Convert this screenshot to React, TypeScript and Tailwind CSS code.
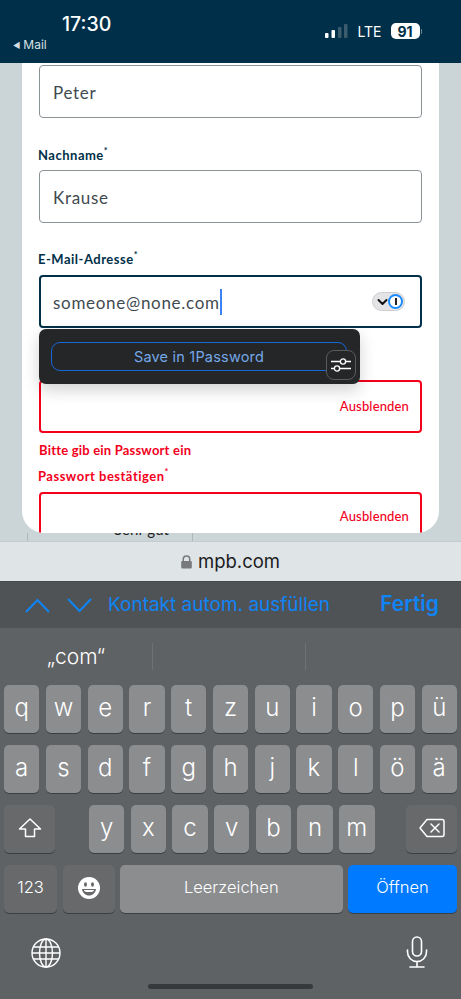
import React from "react";

const web = { fontFamily: "Lato, sans-serif" };
const ios = { fontFamily: "Inter, 'Liberation Sans', sans-serif" };

function Input({ value, error, focus, children, h = "h-[53px]" }: { value?: string; error?: boolean; focus?: boolean; children?: React.ReactNode; h?: string }) {
  const border = error
    ? "border-2 border-[#f2001c]"
    : focus
    ? "border-2 border-[#003049] pl-[12px]"
    : "border border-[#8a9296] pl-[13px]";
  return (
    <div className={`${h} ${border} shrink-0 rounded-[4px] bg-white flex items-center pr-[11px] pt-[3px] text-[17px] tracking-[0.7px] text-[#3f4a50]`}>
      {value}
      {children}
    </div>
  );
}

function Ausblenden() {
  return <span className="ml-auto -mt-[3px] text-[13px] font-medium tracking-[0.15px] text-[#f2001c]">Ausblenden</span>;
}

function Label({ text, color = "text-[#003049]" }: { text: string; color?: string }) {
  return (
    <div className={`h-[16px] -ml-[1px] flex items-center text-[13px] font-bold tracking-[0.5px] ${color}`}>
      {text}
      <sup className="text-[9px] -mt-[2px]">*</sup>
    </div>
  );
}

function Key({ label, wide, dark, blue, grow, small }: { label: React.ReactNode; wide?: string; dark?: boolean; blue?: boolean; grow?: boolean; small?: boolean }) {
  const bg = blue ? "bg-[#007aff]" : dark ? "bg-[#68696b]" : "bg-[#8c8d8f]";
  return (
    <div
      className={`${wide ?? "w-[35.4px]"} ${bg} ${grow ? "flex-1" : "shrink-0"} h-[48px] rounded-[5px] shadow-[0_1px_0_#3c3f42] flex items-center justify-center text-white ${small ? "text-[16.5px] font-light pb-[3px]" : "text-[24px] font-light pb-[3px]"}`}
    >
      {label}
    </div>
  );
}

function Row({ keys }: { keys: string }) {
  return (
    <>
      {keys.split("").map((k) => (
        <Key key={k} label={k} />
      ))}
    </>
  );
}

export default function App() {
  return (
    <div className="relative w-[461px] h-[999px] overflow-hidden flex flex-col bg-[#5f6265]">
      {/* status bar */}
      <div className="h-[63px] shrink-0 bg-[#003049] flex text-white" style={ios}>
        <div className="w-[110px] pl-[13px] relative">
          <div className="pl-[49px] pt-[12px] text-[19.5px] leading-[24px] font-medium">17:30</div>
          <div className="mt-[2px] flex items-center gap-[3px] text-[12px] leading-[14px] text-[#d9e0e4]">
            <span className="text-[8px]">◀</span>
            <span>Mail</span>
          </div>
        </div>
        <div className="ml-auto mr-[39px] mt-[22px] h-[18px] flex items-center">
          <svg width="24" height="16" viewBox="0 0 24 16">
            <rect x="1" y="10" width="3.5" height="5" rx="1" fill="#fff" />
            <rect x="7.5" y="7" width="3.5" height="8" rx="1" fill="#fff" />
            <rect x="14" y="4" width="3.5" height="11" rx="1" fill="#3c5c6e" />
            <rect x="20" y="1" width="3.5" height="14" rx="1" fill="#3c5c6e" />
          </svg>
          <span className="ml-[9px] text-[14px] font-normal">LTE</span>
          <div className="ml-[9px] w-[29px] h-[16px] rounded-[5px] bg-white text-[#003049] text-[14px] font-bold flex items-center justify-center">91</div>
          <div className="ml-[1px] w-[1.5px] h-[5px] rounded-r bg-[#6f8795]" />
        </div>
      </div>

      {/* page */}
      <div className="h-[478px] shrink-0 bg-[#cbd5d7] flex flex-col" style={web}>
        <div className="h-[470px] shrink-0 mx-[22px] bg-white rounded-b-[22px] overflow-hidden px-[17px] pt-[2px] flex flex-col relative z-10">
          <Input value="Peter" />
          <div className="mt-[30px]"><Label text="Nachname" /></div>
          <div className="mt-[6px]"><Input value="Krause" /></div>
          <div className="mt-[29px]"><Label text="E-Mail-Adresse" /></div>
          <div className="mt-[7px]">
            <Input focus>
              <span>someone@none.com</span>
              <span className="w-[2px] h-[26px] bg-[#3b82f6] -mt-[3px]" />
              <div className="ml-auto -mt-[3px] mr-[4px] w-[33px] h-[19px] rounded-full bg-[#e4e4e6] border border-[#cfcfd2] flex items-center justify-between pl-[4px] pr-[1px]">
                <svg width="11" height="8" viewBox="0 0 11 8" fill="none" stroke="#111" strokeWidth="2" strokeLinecap="round" strokeLinejoin="round"><path d="M1.5 2 L5.5 6 L9.5 2" /></svg>
                <div className="w-[15px] h-[15px] rounded-full bg-white border-[2.5px] border-[#1a8cff] flex items-center justify-center">
                  <div className="w-[2px] h-[7px] bg-[#222]" />
                </div>
              </div>
            </Input>
          </div>
          <div className="mt-[52px]">
            <Input error><Ausblenden /></Input>
          </div>
          <div className="mt-[10px] h-[16px] flex items-center text-[13px] font-bold tracking-[0.2px] text-[#f2001c]">Bitte gib ein Passwort ein</div>
          <div className="mt-[10px]"><Label text="Passwort bestätigen" color="text-[#f2001c]" /></div>
          <div className="mt-[7px]">
            <Input error h="h-[50px]"><Ausblenden /></Input>
          </div>
        </div>
        <div className="h-[8px] overflow-hidden ml-[27px] w-[166px] border-x border-[#aeb8bb] pl-[86px] text-[#222] text-[15px] whitespace-nowrap">
          <div className="leading-[18px] -mt-[13px]">Sehr gut</div>
        </div>
      </div>

      {/* 1Password popup */}
      <div className="absolute z-20 left-[39px] top-[329px] w-[321px] h-[55px] rounded-[7px] bg-[#252627] shadow-[0_6px_16px_rgba(0,0,0,0.18)]" style={ios}>
        <div className="absolute left-[12px] top-[13px] w-[296px] h-[29px] rounded-[9px] border border-[#1568d6] flex items-center justify-center text-[14.5px] tracking-[0.2px] text-[#74a8ea]">
          Save in 1Password
        </div>
        <div className="absolute left-[287px] top-[21px] w-[30px] h-[30px] rounded-[8px] bg-[#252627] border border-[#5a5b5d] flex items-center justify-center">
          <svg width="20" height="18" viewBox="0 0 20 18" fill="none" stroke="#fff" strokeWidth="1.3">
            <path d="M0 5.5 H9 M15 5.5 H20 M0 12.5 H3 M9 12.5 H20" />
            <circle cx="12" cy="5.5" r="2.6" />
            <circle cx="6" cy="12.5" r="2.6" />
          </svg>
        </div>
      </div>

      {/* address bar */}
      <div className="h-[40px] shrink-0 bg-[#dfe4e7] border-t border-[#c4cace] flex items-center justify-center gap-[6px]" style={ios}>
        <svg width="11" height="14" viewBox="0 0 11 14" fill="#77797d"><path d="M1.5 6 V4.2 a4 4 0 0 1 8 0 V6 h.3 a1 1 0 0 1 1 1 v5.5 a1 1 0 0 1 -1 1 H1.2 a1 1 0 0 1 -1 -1 V7 a1 1 0 0 1 1 -1 Z M3 6 h5 V4.2 a2.5 2.5 0 0 0 -5 0 Z" /></svg>
        <span className="text-[18.5px] text-[#1c1c1e]">mpb.com</span>
      </div>

      {/* accessory bar */}
      <div className="h-[47px] shrink-0 bg-[#505356] border-t border-[#45484b] flex items-center pl-[25px] pr-[22px] text-[#0f84f5]" style={ios}>
        <svg width="25" height="15" viewBox="0 0 25 15" fill="none" stroke="#0f84f5" strokeWidth="2"><path d="M1 14 L12.5 2 L24 14" /></svg>
        <svg className="ml-[17px]" width="25" height="15" viewBox="0 0 25 15" fill="none" stroke="#0f84f5" strokeWidth="2"><path d="M1 1 L12.5 13 L24 1" /></svg>
        <span className="ml-[16px] text-[19px]">Kontakt autom. ausfüllen</span>
        <span className="ml-auto text-[21px] font-semibold -mt-[2px]">Fertig</span>
      </div>

      {/* keyboard */}
      <div className="flex-1 bg-[#5f6265] flex flex-col text-white" style={ios}>
        <div className="h-[57px] shrink-0 flex items-center">
          <div className="w-[153px] h-[27px] flex items-center justify-center text-[21px] font-light border-r border-[#6f7275]">„com“</div>
          <div className="w-[153px] h-[27px] border-r border-[#6f7275]" />
        </div>
        <div className="px-[4px] flex flex-col gap-[12px]">
          <div className="flex justify-between"><Row keys="qwertzuiopü" /></div>
          <div className="flex justify-between"><Row keys="asdfghjklöä" /></div>
          <div className="flex">
            <Key wide="w-[51px]" dark label={
              <svg width="24" height="22" viewBox="0 0 24 22" fill="none" stroke="#fff" strokeWidth="1.5" strokeLinejoin="round"><path d="M12 2 L22.5 12 H16.5 V19.5 H7.5 V12 H1.5 Z" /></svg>
            } />
            <div className="ml-[34px] flex gap-[6.3px]"><Row keys="yxcvbnm" /></div>
            <div className="ml-auto">
              <Key wide="w-[51px]" dark label={
                <svg width="26" height="20" viewBox="0 0 26 20" fill="none" stroke="#fff" strokeWidth="1.5" strokeLinejoin="round" strokeLinecap="round"><path d="M8 1.5 H23 a2 2 0 0 1 2 2 V16.5 a2 2 0 0 1 -2 2 H8 L1 10 Z" /><path d="M12 6 L20 14 M20 6 L12 14" /></svg>
              } />
            </div>
          </div>
          <div className="flex gap-[5.5px]">
            <Key wide="w-[53px]" dark small label="123" />
            <Key wide="w-[52px]" dark label={
              <svg width="22" height="22" viewBox="0 0 22 22"><circle cx="11" cy="11" r="11" fill="#fff" /><ellipse cx="7.5" cy="7.5" rx="1.5" ry="2.2" fill="#68696b" /><ellipse cx="14.5" cy="7.5" rx="1.5" ry="2.2" fill="#68696b" /><path d="M4 12 H18 C17.5 16 14.5 18.5 11 18.5 C7.5 18.5 4.5 16 4 12 Z" fill="#68696b" /><path d="M6 13 H16 C15.6 14.5 15 15 11 15 C7 15 6.4 14.5 6 13 Z" fill="#fff" /></svg>
            } />
            <Key grow small label="Leerzeichen" />
            <Key wide="w-[109px]" blue small label="Öffnen" />
          </div>
        </div>
        <div className="relative flex-1 px-[31px] pt-[25px] flex justify-between items-start">
          <svg width="30" height="30" viewBox="0 0 30 30" fill="none" stroke="#fff" strokeWidth="1.4">
            <circle cx="15" cy="15" r="14" />
            <ellipse cx="15" cy="15" rx="6.5" ry="14" />
            <path d="M15 1 V29 M2.5 9 H27.5 M1 15 H29 M2.5 21 H27.5" />
          </svg>
          <svg className="-mt-[2px] mr-[2px]" width="22" height="32" viewBox="0 0 22 32" fill="none" stroke="#fff" strokeWidth="1.6" strokeLinecap="round">
            <rect x="6.5" y="1" width="9" height="19" rx="4.5" />
            <path d="M1.5 14 V16 a9.5 9.5 0 0 0 19 0 V14 M11 25.5 V31 M4 31 H18" />
          </svg>
          <div className="absolute left-[148px] top-[71px] w-[165px] h-[5px] rounded-full bg-[#37393b]" />
        </div>
      </div>
    </div>
  );
}
